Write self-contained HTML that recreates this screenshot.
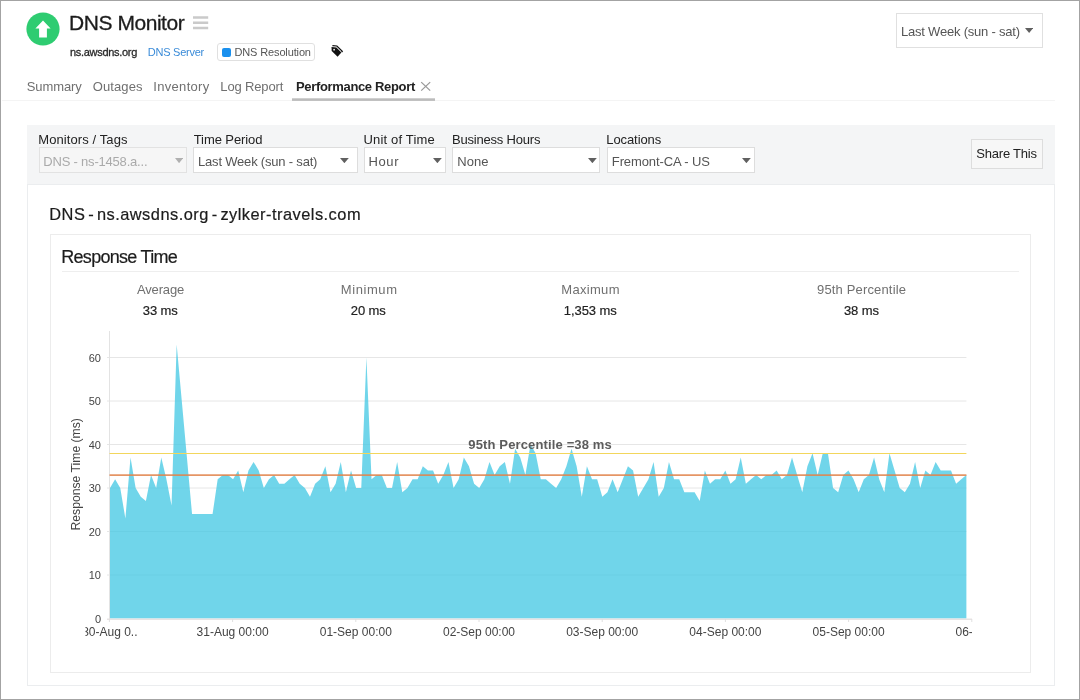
<!DOCTYPE html>
<html lang="en"><head><meta charset="utf-8"><title>DNS Monitor - Performance Report</title>
<style>
html,body{margin:0;padding:0;background:#fff}
body{width:1080px;height:700px;position:relative;overflow:hidden;font-family:"Liberation Sans",Arial,Helvetica,sans-serif}
.t{position:absolute;white-space:nowrap;display:block}
.ws{word-spacing:-2.2px}
.hv{-webkit-text-stroke:0.3px currentColor}
.hv2{-webkit-text-stroke:0.2px currentColor}
.b{position:absolute;box-sizing:border-box;display:block}
#frame{left:0;top:0;width:1080px;height:700px;border:1px solid #a3a3a3;z-index:50;pointer-events:none}
.sel{background:#fff;border:1px solid #ddd}
.sel.dis{background:#f6f6f6;border-color:#e2e2e2}
#app{position:absolute;left:0;top:0;width:1080px;height:700px;will-change:transform}
svg text{font-family:"Liberation Sans",Arial,Helvetica,sans-serif}
</style></head><body>

<div id="frame" class="b"></div>
<div id="app">
<header>
<svg class="b" style="left:26px;top:12px" width="34" height="34" viewBox="0 0 34 34"><circle cx="17" cy="17" r="16.6" fill="#2ecc71"/><path d="M17 8.6L24.6 16.6H20.9V25.6H13.1V16.6H9.4Z" fill="#fff"/></svg>
<span id="title" class="t hv" style="left:69.11px;top:12.22px;font-size:21px;line-height:21px;color:#1c1c1c;font-weight:400;letter-spacing:-0.465px">DNS Monitor</span>
<svg class="b" style="left:193px;top:16px" width="16" height="14" viewBox="0 0 16 14"><path d="M0 1.5H15.2M0 6.8H15.2M0 12H15.2" stroke="#cacaca" stroke-width="2.5" fill="none"/></svg>
<span id="host" class="t hv" style="left:70.00px;top:47.19px;font-size:11px;line-height:11px;color:#2a2a2a;font-weight:400;letter-spacing:-0.304px">ns.awsdns.org</span>
<span id="srv" class="t " style="left:147.80px;top:47.19px;font-size:11px;line-height:11px;color:#3a8bd8;font-weight:400;letter-spacing:-0.244px">DNS Server</span>
<div class="b" style="left:217px;top:43px;width:98px;height:17.6px;border:1px solid #e0e0e0;border-radius:3px;background:#fff"></div>
<div class="b" style="left:221.8px;top:48px;width:8.8px;height:8.6px;background:#1a90ee;border-radius:2px"></div>
<span id="badge" class="t " style="left:234.50px;top:47.19px;font-size:11px;line-height:11px;color:#555;font-weight:400;letter-spacing:-0.137px">DNS Resolution</span>
<svg class="b" style="left:331px;top:45px" width="13" height="12" viewBox="0 0 13 12"><path d="M0.5 2.1L5.4 2.4L10.4 7.6L6.6 11.7L0.7 6Z" fill="#111"/><circle cx="3.1" cy="4.7" r="0.85" fill="#fff"/><path d="M1.4 0.7L5.9 1L11.3 6.3L10.6 7.2" stroke="#111" stroke-width="1.25" fill="none"/></svg>
<div class="b" style="left:896px;top:12.5px;width:147px;height:35px;border:1px solid #e0e0e0;background:#fff"></div>
<span id="topsel" class="t " style="left:901.02px;top:25.30px;font-size:13px;line-height:13px;color:#555;font-weight:400;letter-spacing:-0.218px">Last Week (sun - sat)</span>
<svg class="b" style="left:1024.7px;top:27.6px" width="8.3" height="5" viewBox="0 0 8.3 5"><path d="M0 0H8.3L4.15 5Z" fill="#606060"/></svg>
</header>
<nav>
<span id="tab1" class="t " style="left:26.80px;top:79.60px;font-size:13px;line-height:13px;color:#707070;font-weight:400;letter-spacing:-0.108px">Summary</span>
<span id="tab2" class="t " style="left:92.80px;top:79.60px;font-size:13px;line-height:13px;color:#707070;font-weight:400;letter-spacing:0.086px">Outages</span>
<span id="tab3" class="t " style="left:153.30px;top:79.60px;font-size:13px;line-height:13px;color:#707070;font-weight:400;letter-spacing:0.310px">Inventory</span>
<span id="tab4" class="t " style="left:220.32px;top:79.60px;font-size:13px;line-height:13px;color:#707070;font-weight:400;letter-spacing:-0.151px">Log Report</span>
<span id="tab5" class="t " style="left:296.02px;top:79.60px;font-size:13px;line-height:13px;color:#222;font-weight:700;letter-spacing:-0.339px">Performance Report</span>
<svg class="b" style="left:420px;top:81px" width="11" height="11" viewBox="0 0 11 11"><path d="M1.2 1.1L10.2 9.6M10.2 1.1L1.2 9.6" stroke="#999" stroke-width="1.25" fill="none"/></svg>
<div class="b" style="left:2px;top:100px;width:1053px;height:1px;background:#f4f4f4"></div>
<svg class="b" style="left:292px;top:97px" width="143" height="5" viewBox="0 0 143 5"><rect x="0" y="1.3" width="143" height="2.6" fill="#bcbcbc"/></svg>
</nav>
<section>
<div class="b" style="left:27px;top:125px;width:1028px;height:60px;background:#f4f5f6"></div>
<span id="l1" class="t " style="left:38.30px;top:133.00px;font-size:13px;line-height:13px;color:#222;font-weight:400;letter-spacing:0.091px">Monitors / Tags</span>
<span id="l2" class="t " style="left:193.72px;top:133.00px;font-size:13px;line-height:13px;color:#222;font-weight:400;letter-spacing:-0.088px">Time Period</span>
<span id="l3" class="t " style="left:363.56px;top:133.00px;font-size:13px;line-height:13px;color:#222;font-weight:400;letter-spacing:0.165px">Unit of Time</span>
<span id="l4" class="t " style="left:452.02px;top:133.00px;font-size:13px;line-height:13px;color:#222;font-weight:400;letter-spacing:-0.199px">Business Hours</span>
<span id="l5" class="t " style="left:606.28px;top:133.00px;font-size:13px;line-height:13px;color:#222;font-weight:400;letter-spacing:-0.086px">Locations</span>
<div class="b sel dis" style="left:39px;top:147px;width:147.5px;height:26px;"></div>
<div class="b sel" style="left:193px;top:147px;width:164.5px;height:26px;"></div>
<div class="b sel" style="left:364px;top:147px;width:82px;height:26px;"></div>
<div class="b sel" style="left:452px;top:147px;width:148px;height:26px;"></div>
<div class="b sel" style="left:606.5px;top:147px;width:148.5px;height:26px;"></div>
<span id="s1" class="t " style="left:43.30px;top:154.80px;font-size:13px;line-height:13px;color:#aaa;font-weight:400;letter-spacing:-0.203px">DNS - ns-1458.a...</span>
<span id="s2" class="t " style="left:198.02px;top:154.80px;font-size:13px;line-height:13px;color:#555;font-weight:400;letter-spacing:-0.194px">Last Week (sun - sat)</span>
<span id="s3" class="t " style="left:368.56px;top:154.80px;font-size:13px;line-height:13px;color:#555;font-weight:400;letter-spacing:0.590px">Hour</span>
<span id="s4" class="t " style="left:457.28px;top:154.80px;font-size:13px;line-height:13px;color:#555;font-weight:400;letter-spacing:0.039px">None</span>
<span id="s5" class="t " style="left:611.80px;top:154.80px;font-size:13px;line-height:13px;color:#555;font-weight:400;letter-spacing:-0.107px">Fremont-CA - US</span>
<svg class="b" style="left:175.3px;top:157.5px" width="8.2" height="5.2" viewBox="0 0 8.2 5.2"><path d="M0 0H8.2L4.1 5.2Z" fill="#b0b0b0"/></svg>
<svg class="b" style="left:340.2px;top:157.5px" width="8.8" height="5.2" viewBox="0 0 8.8 5.2"><path d="M0 0H8.8L4.4 5.2Z" fill="#606060"/></svg>
<svg class="b" style="left:432.8px;top:157.5px" width="8.8" height="5.2" viewBox="0 0 8.8 5.2"><path d="M0 0H8.8L4.4 5.2Z" fill="#606060"/></svg>
<svg class="b" style="left:588.2px;top:157.5px" width="8.8" height="5.2" viewBox="0 0 8.8 5.2"><path d="M0 0H8.8L4.4 5.2Z" fill="#606060"/></svg>
<svg class="b" style="left:742px;top:157.5px" width="8.8" height="5.2" viewBox="0 0 8.8 5.2"><path d="M0 0H8.8L4.4 5.2Z" fill="#606060"/></svg>
<div class="b" style="left:971px;top:138.5px;width:71.5px;height:30.5px;background:#f7f7f7;border:1px solid #ddd"></div>
<span id="share" class="t " style="left:976.30px;top:147.30px;font-size:13px;line-height:13px;color:#222;font-weight:400;letter-spacing:-0.219px">Share This</span>
</section>
<main>
<div class="b" style="left:27px;top:184px;width:1028px;height:502px;background:#fff;border:1px solid #ebedef"></div>
<span id="h2" class="t ws hv2" style="left:49.30px;top:206.42px;font-size:16.4px;line-height:16.4px;color:#1c1c1c;font-weight:400;letter-spacing:0.476px">DNS - ns.awsdns.org - zylker-travels.com</span>
<div class="b" style="left:50px;top:234px;width:981px;height:438.5px;background:#fff;border:1px solid #ececec"></div>
<span id="h3" class="t hv2" style="left:61.30px;top:248.16px;font-size:18px;line-height:18px;color:#1c1c1c;font-weight:400;letter-spacing:-0.720px">Response Time</span>
<div class="b" style="left:62px;top:271px;width:956.5px;height:1px;background:#eee"></div>
<span id="a1" class="t " style="left:137.00px;top:282.80px;font-size:13px;line-height:13px;color:#707070;font-weight:400;letter-spacing:-0.165px">Average</span>
<span id="a2" class="t " style="left:340.80px;top:282.80px;font-size:13px;line-height:13px;color:#707070;font-weight:400;letter-spacing:0.573px">Minimum</span>
<span id="a3" class="t " style="left:561.30px;top:282.80px;font-size:13px;line-height:13px;color:#707070;font-weight:400;letter-spacing:0.304px">Maximum</span>
<span id="a4" class="t " style="left:817.00px;top:282.80px;font-size:13px;line-height:13px;color:#707070;font-weight:400;letter-spacing:0.160px">95th Percentile</span>
<span id="v1" class="t hv2" style="left:142.80px;top:303.60px;font-size:13px;line-height:13px;color:#222;font-weight:400;letter-spacing:-0.113px">33 ms</span>
<span id="v2" class="t hv2" style="left:350.80px;top:303.60px;font-size:13px;line-height:13px;color:#222;font-weight:400;letter-spacing:-0.112px">20 ms</span>
<span id="v3" class="t hv2" style="left:563.80px;top:303.60px;font-size:13px;line-height:13px;color:#222;font-weight:400;letter-spacing:-0.073px">1,353 ms</span>
<span id="v4" class="t hv2" style="left:844.00px;top:303.60px;font-size:13px;line-height:13px;color:#222;font-weight:400;letter-spacing:-0.112px">38 ms</span>
<svg class="b" style="left:0;top:325px" width="1080" height="330" viewBox="0 325 1080 330">
<defs><clipPath id="cp"><rect x="85.5" y="325" width="886.5" height="330"/></clipPath></defs>
<path d="M107 575.00H966.4" stroke="#e6e6e6" stroke-width="1" fill="none"/>
<path d="M107 531.50H966.4" stroke="#e6e6e6" stroke-width="1" fill="none"/>
<path d="M107 488.00H966.4" stroke="#e6e6e6" stroke-width="1" fill="none"/>
<path d="M107 444.50H966.4" stroke="#e6e6e6" stroke-width="1" fill="none"/>
<path d="M107 401.00H966.4" stroke="#e6e6e6" stroke-width="1" fill="none"/>
<path d="M107 357.50H966.4" stroke="#e6e6e6" stroke-width="1" fill="none"/>
<path d="M109.5 331V619" stroke="#e3e3e3" stroke-width="1" fill="none"/>
<path d="M110.00 618.50 L110.00 488.00 L115.13 479.30 L120.26 488.00 L125.38 518.45 L130.51 457.55 L135.64 488.00 L140.77 496.70 L145.90 501.05 L151.02 474.95 L156.15 488.00 L161.28 457.55 L166.41 479.30 L171.54 505.40 L176.66 344.45 L181.79 401.00 L186.92 457.55 L192.05 514.10 L197.18 514.10 L202.30 514.10 L207.43 514.10 L212.56 514.10 L217.69 479.30 L222.82 474.95 L227.94 474.95 L233.07 479.30 L238.20 470.60 L243.33 492.35 L248.46 470.60 L253.58 461.90 L258.71 470.60 L263.84 488.00 L268.97 479.30 L274.10 474.95 L279.22 483.65 L284.35 483.65 L289.48 479.30 L294.61 474.95 L299.74 483.65 L304.86 488.00 L309.99 496.70 L315.12 483.65 L320.25 479.30 L325.38 466.25 L330.50 492.35 L335.63 483.65 L340.76 461.90 L345.89 492.35 L351.02 470.60 L356.14 488.00 L361.27 488.00 L366.40 357.50 L371.53 479.30 L376.66 474.95 L381.78 474.95 L386.91 488.00 L392.04 488.00 L397.17 461.90 L402.30 492.35 L407.42 488.00 L412.55 479.30 L417.68 479.30 L422.81 466.25 L427.94 470.60 L433.06 470.60 L438.19 483.65 L443.32 474.95 L448.45 461.90 L453.58 488.00 L458.70 479.30 L463.83 457.55 L468.96 466.25 L474.09 483.65 L479.22 488.00 L484.34 479.30 L489.47 461.90 L494.60 474.95 L499.73 466.25 L504.86 461.90 L509.98 483.65 L515.11 448.85 L520.24 457.55 L525.37 474.95 L530.50 444.50 L535.62 453.20 L540.75 479.30 L545.88 479.30 L551.01 483.65 L556.14 488.00 L561.26 479.30 L566.39 466.25 L571.52 448.85 L576.65 466.25 L581.78 496.70 L586.90 466.25 L592.03 479.30 L597.16 479.30 L602.29 496.70 L607.42 492.35 L612.54 479.30 L617.67 492.35 L622.80 479.30 L627.93 466.25 L633.06 470.60 L638.18 496.70 L643.31 488.00 L648.44 479.30 L653.57 461.90 L658.70 496.70 L663.82 488.00 L668.95 461.90 L674.08 479.30 L679.21 479.30 L684.34 492.35 L689.46 492.35 L694.59 492.35 L699.72 501.05 L704.85 470.60 L709.98 483.65 L715.10 479.30 L720.23 479.30 L725.36 470.60 L730.49 483.65 L735.62 479.30 L740.74 457.55 L745.87 483.65 L751.00 479.30 L756.13 474.95 L761.26 479.30 L766.38 474.95 L771.51 474.95 L776.64 470.60 L781.77 479.30 L786.90 474.95 L792.02 457.55 L797.15 474.95 L802.28 492.35 L807.41 466.25 L812.54 453.20 L817.66 474.95 L822.79 453.20 L827.92 453.20 L833.05 488.00 L838.18 492.35 L843.30 474.95 L848.43 470.60 L853.56 479.30 L858.69 492.35 L863.82 479.30 L868.94 474.95 L874.07 457.55 L879.20 479.30 L884.33 492.35 L889.46 453.20 L894.58 470.60 L899.71 488.00 L904.84 492.35 L909.97 483.65 L915.10 461.90 L920.22 488.00 L925.35 470.60 L930.48 474.95 L935.61 461.90 L940.74 470.60 L945.86 470.60 L950.99 470.60 L956.12 483.65 L961.25 479.30 L966.38 474.95 L966.38 618.50 Z" fill="#40c7e3" fill-opacity="0.75"/>
<path d="M107 619.3H972" stroke="#e8e3e3" stroke-width="1.5" fill="none"/>
<path d="M109.4 619V622" stroke="#e0e0e0" stroke-width="1" fill="none"/>
<path d="M232.6 619V622" stroke="#e0e0e0" stroke-width="1" fill="none"/>
<path d="M355.8 619V622" stroke="#e0e0e0" stroke-width="1" fill="none"/>
<path d="M479.0 619V622" stroke="#e0e0e0" stroke-width="1" fill="none"/>
<path d="M602.2 619V622" stroke="#e0e0e0" stroke-width="1" fill="none"/>
<path d="M725.4 619V622" stroke="#e0e0e0" stroke-width="1" fill="none"/>
<path d="M848.6 619V622" stroke="#e0e0e0" stroke-width="1" fill="none"/>
<path d="M971.8 619V622" stroke="#e0e0e0" stroke-width="1" fill="none"/>
<path d="M109.5 453.5H966.4" stroke="#f2d65c" stroke-width="1" fill="none"/>
<path d="M109.5 475.10H966.4" stroke="#e0824a" stroke-width="1.6" fill="none" opacity="0.85"/>
<text x="101" y="622.6" text-anchor="end" font-size="11" fill="#444">0</text>
<text x="101" y="579.1" text-anchor="end" font-size="11" fill="#444">10</text>
<text x="101" y="535.6" text-anchor="end" font-size="11" fill="#444">20</text>
<text x="101" y="492.1" text-anchor="end" font-size="11" fill="#444">30</text>
<text x="101" y="448.6" text-anchor="end" font-size="11" fill="#444">40</text>
<text x="101" y="405.1" text-anchor="end" font-size="11" fill="#444">50</text>
<text x="101" y="361.6" text-anchor="end" font-size="11" fill="#444">60</text>
<text transform="translate(80 474.3) rotate(-90)" text-anchor="middle" font-size="12.2" fill="#444">Response Time (ms)</text>
<g clip-path="url(#cp)">
<text x="137.5" y="635.8" text-anchor="end" font-size="12" fill="#444">30-Aug 0..</text>
<text x="232.6" y="635.8" text-anchor="middle" font-size="12" fill="#444">31-Aug 00:00</text>
<text x="355.8" y="635.8" text-anchor="middle" font-size="12" fill="#444">01-Sep 00:00</text>
<text x="479.0" y="635.8" text-anchor="middle" font-size="12" fill="#444">02-Sep 00:00</text>
<text x="602.2" y="635.8" text-anchor="middle" font-size="12" fill="#444">03-Sep 00:00</text>
<text x="725.4" y="635.8" text-anchor="middle" font-size="12" fill="#444">04-Sep 00:00</text>
<text x="848.6" y="635.8" text-anchor="middle" font-size="12" fill="#444">05-Sep 00:00</text>
<text x="955.5" y="635.8" text-anchor="start" font-size="12" fill="#444">06-Sep 00:00</text>
</g>
<text id="pct" x="468.3" y="448.5" font-size="13" font-weight="700" fill="#5c5c5c" letter-spacing="0.14">95th Percentile =38 ms</text>
</svg>
</main>
</div>
</body></html>
